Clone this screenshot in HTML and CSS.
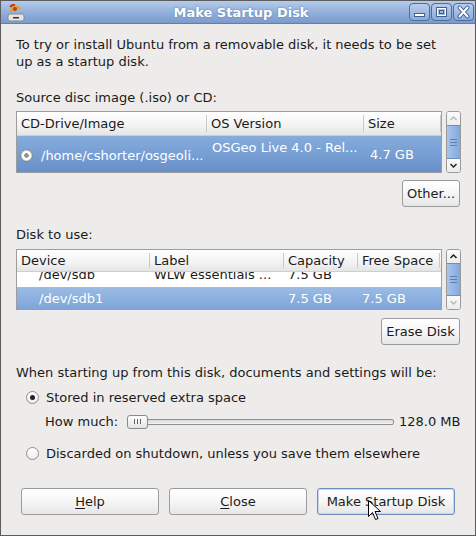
FILE: index.html
```html
<!DOCTYPE html>
<html>
<head>
<meta charset="utf-8">
<link rel="stylesheet" href="styles.css">
</head>
<body>
<div class="window">
  <div class="titlebar">
    <svg class="app-icon" width="20" height="18" viewBox="0 0 20 18">
      <path d="M5 8 A5 5 0 0 1 14 5" fill="none" stroke="#e0a020" stroke-width="2.5"/>
      <path d="M4 3 A5 5 0 0 1 9 1" fill="none" stroke="#d83020" stroke-width="2"/>
      <circle cx="9" cy="5" r="2" fill="#c04010"/>
      <rect x="2" y="10" width="16" height="7" rx="2" fill="#e4e4e4" stroke="#8a8a8a"/>
      <rect x="7" y="13" width="6" height="1.5" fill="#333"/>
    </svg>
    <div class="title">Make Startup Disk</div>
    <div class="wbtns">
      <span class="wbtn"><svg width="21" height="18" viewBox="0 0 21 18"><rect x="5.5" y="10.5" width="10" height="3" fill="#fff" stroke="#3f5f92"/></svg></span>
      <span class="wbtn"><svg width="21" height="18" viewBox="0 0 21 18"><rect x="5.5" y="4.5" width="10" height="9" fill="none" stroke="#3f5f92" stroke-width="1"/><rect x="6.5" y="5.5" width="8" height="7" fill="none" stroke="#fff" stroke-width="1"/><rect x="8.5" y="7.5" width="4" height="3" fill="none" stroke="#3f5f92"/></svg></span>
      <span class="wbtn"><svg width="21" height="18" viewBox="0 0 21 18"><path d="M6.5 4.5 L14.5 13.5 M14.5 4.5 L6.5 13.5" stroke="#3f5f92" stroke-width="4" stroke-linecap="round"/><path d="M6.5 4.5 L14.5 13.5 M14.5 4.5 L6.5 13.5" stroke="#fff" stroke-width="2" stroke-linecap="round"/></svg></span>
    </div>
  </div>
  <div class="content">
    <p class="intro">To try or install Ubuntu from a removable disk, it needs to be set<br>up as a startup disk.</p>

    <div class="label gap19">Source disc image (.iso) or CD:</div>
    <div class="tablewrap t1wrap">
      <div class="table t1">
        <div class="thead">
          <div class="th">CD-Drive/Image</div>
          <div class="th">OS Version</div>
          <div class="th">Size</div>
        </div>
        <div class="row sel1">
          <div class="td td-icon"><span class="disc"></span>/home/cshorter/osgeoli...</div>
          <div class="td td-top">OSGeo Live 4.0 - Rel...</div>
          <div class="td">4.7 GB</div>
        </div>
      </div>
      <div class="scrollbar sb1">
        <div class="sb-btn"><svg width="13" height="13" viewBox="0 0 13 13"><path d="M3.5 8 L6.5 5 L9.5 8" fill="none" stroke="#b8b8b8" stroke-width="1.3"/></svg></div>
        <div class="sb-thumb"><span></span><span></span><span></span></div>
        <div class="sb-btn"><svg width="13" height="13" viewBox="0 0 13 13"><path d="M3.5 5 L6.5 8 L9.5 5" fill="none" stroke="#222" stroke-width="1.5"/></svg></div>
      </div>
    </div>
    <div class="btnrow gap7"><button class="btn btn-other">Other...</button></div>

    <div class="label gap19">Disk to use:</div>
    <div class="tablewrap t2wrap">
      <div class="table t2">
        <div class="thead">
          <div class="th">Device</div>
          <div class="th">Label</div>
          <div class="th">Capacity</div>
          <div class="th">Free Space</div>
        </div>
        <div class="tbody">
          <div class="row plain">
            <div class="td ind">/dev/sdb</div>
            <div class="td">WLW essentials ...</div>
            <div class="td">7.5 GB</div>
            <div class="td"></div>
          </div>
          <div class="row sel2">
            <div class="td ind">/dev/sdb1</div>
            <div class="td"></div>
            <div class="td">7.5 GB</div>
            <div class="td">7.5 GB</div>
          </div>
        </div>
      </div>
      <div class="scrollbar sb2">
        <div class="sb-btn"><svg width="13" height="13" viewBox="0 0 13 13"><path d="M3.5 8 L6.5 5 L9.5 8" fill="none" stroke="#222" stroke-width="1.5"/></svg></div>
        <div class="sb-thumb"><span></span><span></span><span></span></div>
        <div class="sb-btn"><svg width="13" height="13" viewBox="0 0 13 13"><path d="M3.5 5 L6.5 8 L9.5 5" fill="none" stroke="#b8b8b8" stroke-width="1.3"/></svg></div>
      </div>
    </div>
    <div class="btnrow gap8"><button class="btn btn-erase">Erase Disk</button></div>

    <div class="label gap19">When starting up from this disk, documents and settings will be:</div>
    <div class="radio-row gap8"><span class="radio on"></span>Stored in reserved extra space</div>
    <div class="slider-row">
      <span class="hm">How much:</span>
      <div class="slider"><div class="trough"></div><div class="thumb"><i></i><i></i><i></i></div></div>
      <span class="mb">128.0 MB</span>
    </div>
    <div class="radio-row gap15"><span class="radio"></span>Discarded on shutdown, unless you save them elsewhere</div>

    <div class="actions">
      <button class="btn act"><u>H</u>elp</button>
      <button class="btn act"><u>C</u>lose</button>
      <button class="btn act focus">Make Startup Disk</button>
    </div>
  </div>
  <svg class="cursor" width="14" height="22" viewBox="0 0 14 22">
    <path d="M0.5 0.5 L0.5 16.5 L4.5 12.5 L7.5 19.5 L10 18.5 L7 11.5 L12.5 11.5 Z" fill="#fff" stroke="#000" stroke-width="1"/>
  </svg>
</div>
</body>
</html>
```
FILE: styles.css
```css
html, body {
  margin: 0;
  padding: 0;
  background: #edeceb;
}
body {
  font-family: "DejaVu Sans", sans-serif;
  font-size: 13px;
  color: #1a1a1a;
}
.window {
  position: relative;
  width: 476px;
  height: 536px;
  box-sizing: border-box;
  border: 1px solid #5c5c5c;
  background: #edeceb;
}
.titlebar {
  height: 22px;
  background: linear-gradient(#b4cbea, #8eacd9 60%, #7b9bcd);
  border-bottom: 1px solid #5d7fb2;
  display: flex;
  align-items: center;
  position: relative;
}
.app-icon {
  margin-left: 5px;
  margin-top: 1px;
}
.title {
  position: absolute;
  left: 0;
  right: 0;
  text-align: center;
  color: #fff;
  font-weight: bold;
  font-size: 13px;
  text-shadow: 0 0 2px #52709e;
  padding-left: 6px;
}
.wbtns {
  margin-left: auto;
  margin-right: 1px;
  display: flex;
  gap: 1px;
  position: relative;
}
.wbtn {
  width: 21px;
  height: 18px;
  box-sizing: border-box;
  border: 1px solid #4d6c9f;
  border-radius: 4px;
  background: linear-gradient(#b9cdea, #8eabd6);
  display: flex;
  align-items: center;
  justify-content: center;
  overflow: hidden;
}
.wbtn svg { display: block; flex: none; }

.content {
  padding: 12px 0 0 15px;
  line-height: 17px;
}
.intro {
  margin: 0;
}
.label { }
.gap19 { margin-top: 19px; }
.gap7 { margin-top: 7px; }
.gap8 { margin-top: 8px; }
.gap15 { margin-top: 15px; }

.tablewrap {
  display: flex;
  gap: 4px;
}
.t1wrap { margin-top: 5px; }
.t2wrap { margin-top: 6px; }
.table {
  border: 1px solid #9d9d9d;
  background: #fff;
  box-sizing: border-box;
  width: 426px;
}
.t1 { height: 62px; }
.t2 { height: 61px; }
.thead, .row {
  display: grid;
}
.t1 .thead, .t1 .row {
  grid-template-columns: 190px 157px 77px;
}
.t2 .thead, .t2 .row {
  grid-template-columns: 133px 134px 74px 82px;
}
.thead {
  background: linear-gradient(#ffffff, #f3f3f3 60%, #e4e4e4);
  border-bottom: 1px solid #cfcfcf;
  box-sizing: border-box;
  position: relative;
  z-index: 1;
}
.t1 .thead { height: 24px; }
.t2 .thead { height: 22px; }
.th {
  padding-left: 4px;
  display: flex;
  align-items: center;
  position: relative;
  color: #1a1a1a;
}
.th::after {
  content: "";
  position: absolute;
  right: 0;
  top: 3px;
  bottom: 3px;
  width: 1px;
  background: #c9c9c9;
}
.td {
  padding-left: 4px;
  display: flex;
  align-items: center;
  white-space: nowrap;
  overflow: hidden;
}
.sel1 {
  height: 36px;
  background: linear-gradient(#86abdc, #779fd4 50%, #6890c9);
  color: #fff;
}
.td-top { align-items: flex-start; padding-top: 3px; }
.td-icon { padding-left: 3px; padding-top: 3px; }
.disc {
  width: 11px;
  height: 11px;
  border-radius: 50%;
  border: 1px solid #8a8a8a;
  background: radial-gradient(circle, #909090 0 2px, #ffffff 2.5px 4px, #d6d6d6 5px);
  margin-right: 8px;
  flex: none;
}
.t1 .row .td:nth-child(2) { padding-left: 5px; }
.t1 .row .td:nth-child(3) { padding-left: 6px; }
.tbody {
  height: 37px;
  overflow: hidden;
}
.row.plain {
  height: 22px;
  margin-top: -7px;
}
.row.plain .td { padding-bottom: 3px; }
.sel2 {
  height: 22px;
  background: linear-gradient(#9dbce5, #8cb0df 50%, #7fa4d8);
  color: #fff;
}
.ind { padding-left: 22px; }

.scrollbar {
  width: 15px;
  box-sizing: border-box;
  border: 1px solid #9a9a9a;
  border-radius: 3px;
  background: #fff;
  display: flex;
  flex-direction: column;
  overflow: hidden;
}
.sb1 { height: 62px; }
.sb2 { height: 61px; }
.sb-btn {
  height: 13px;
  display: flex;
  align-items: center;
  justify-content: center;
  background: linear-gradient(#fbfbfb, #ececec);
}
.sb-btn svg { display: block; }
.sb-thumb {
  flex: 1;
  background: linear-gradient(90deg, #a9c4ea, #84a8dc);
  border-top: 1px solid #6b8fc4;
  border-bottom: 1px solid #6b8fc4;
  display: flex;
  flex-direction: column;
  align-items: center;
  justify-content: center;
  gap: 2px;
}
.sb-thumb span {
  width: 7px;
  height: 1px;
  background: #5c7eb3;
}

.btnrow {
  display: flex;
  justify-content: flex-end;
  padding-right: 15px;
}
.btn {
  font-family: "DejaVu Sans", sans-serif;
  font-size: 13px;
  color: #1a1a1a;
  height: 27px;
  box-sizing: border-box;
  border: 1px solid #9b9b9b;
  border-radius: 3px;
  background: linear-gradient(#ffffff, #f6f6f6 50%, #e6e6e6);
  padding: 0;
  margin: 0;
  line-height: 17px;
}
.btn-other { width: 58px; }
.btn-erase { width: 79px; }

.radio-row {
  display: flex;
  align-items: center;
  height: 17px;
  padding-left: 10px;
}
.radio {
  width: 11px;
  height: 11px;
  border-radius: 50%;
  border: 1px solid #8d8d8d;
  background: linear-gradient(#ffffff, #ececec);
  margin-right: 7px;
  position: relative;
  flex: none;
}
.radio.on::after {
  content: "";
  position: absolute;
  left: 3px;
  top: 3px;
  width: 5px;
  height: 5px;
  border-radius: 50%;
  background: #222;
}
.slider-row {
  display: flex;
  align-items: center;
  height: 17px;
  margin-top: 7px;
  padding-left: 29px;
}
.hm { width: 82px; }
.slider {
  position: relative;
  width: 267px;
  height: 14px;
  display: flex;
  align-items: center;
}
.trough {
  width: 100%;
  height: 6px;
  box-sizing: border-box;
  border: 1px solid #8e8e8e;
  border-radius: 2px;
  background: linear-gradient(#d9d9d9, #f2f2f2);
}
.thumb {
  position: absolute;
  left: 0;
  top: 0;
  width: 21px;
  height: 14px;
  box-sizing: border-box;
  border: 1px solid #8a8a8a;
  border-radius: 3px;
  background: linear-gradient(#ffffff, #e4e4e4);
  display: flex;
  align-items: center;
  justify-content: center;
  gap: 2px;
}
.thumb i {
  width: 1px;
  height: 5px;
  background: #666;
}
.mb { margin-left: 5px; }

.actions {
  display: flex;
  gap: 10px;
  margin-top: 26px;
  padding-left: 5px;
}
.act {
  width: 138px;
}
.act u { text-decoration: underline; text-underline-offset: 2px; }
.act.focus {
  border-color: #6f8fc2;
  box-shadow: inset 0 0 0 1px #c8d6ec;
}
.cursor {
  position: absolute;
  left: 367px;
  top: 499px;
}
```
